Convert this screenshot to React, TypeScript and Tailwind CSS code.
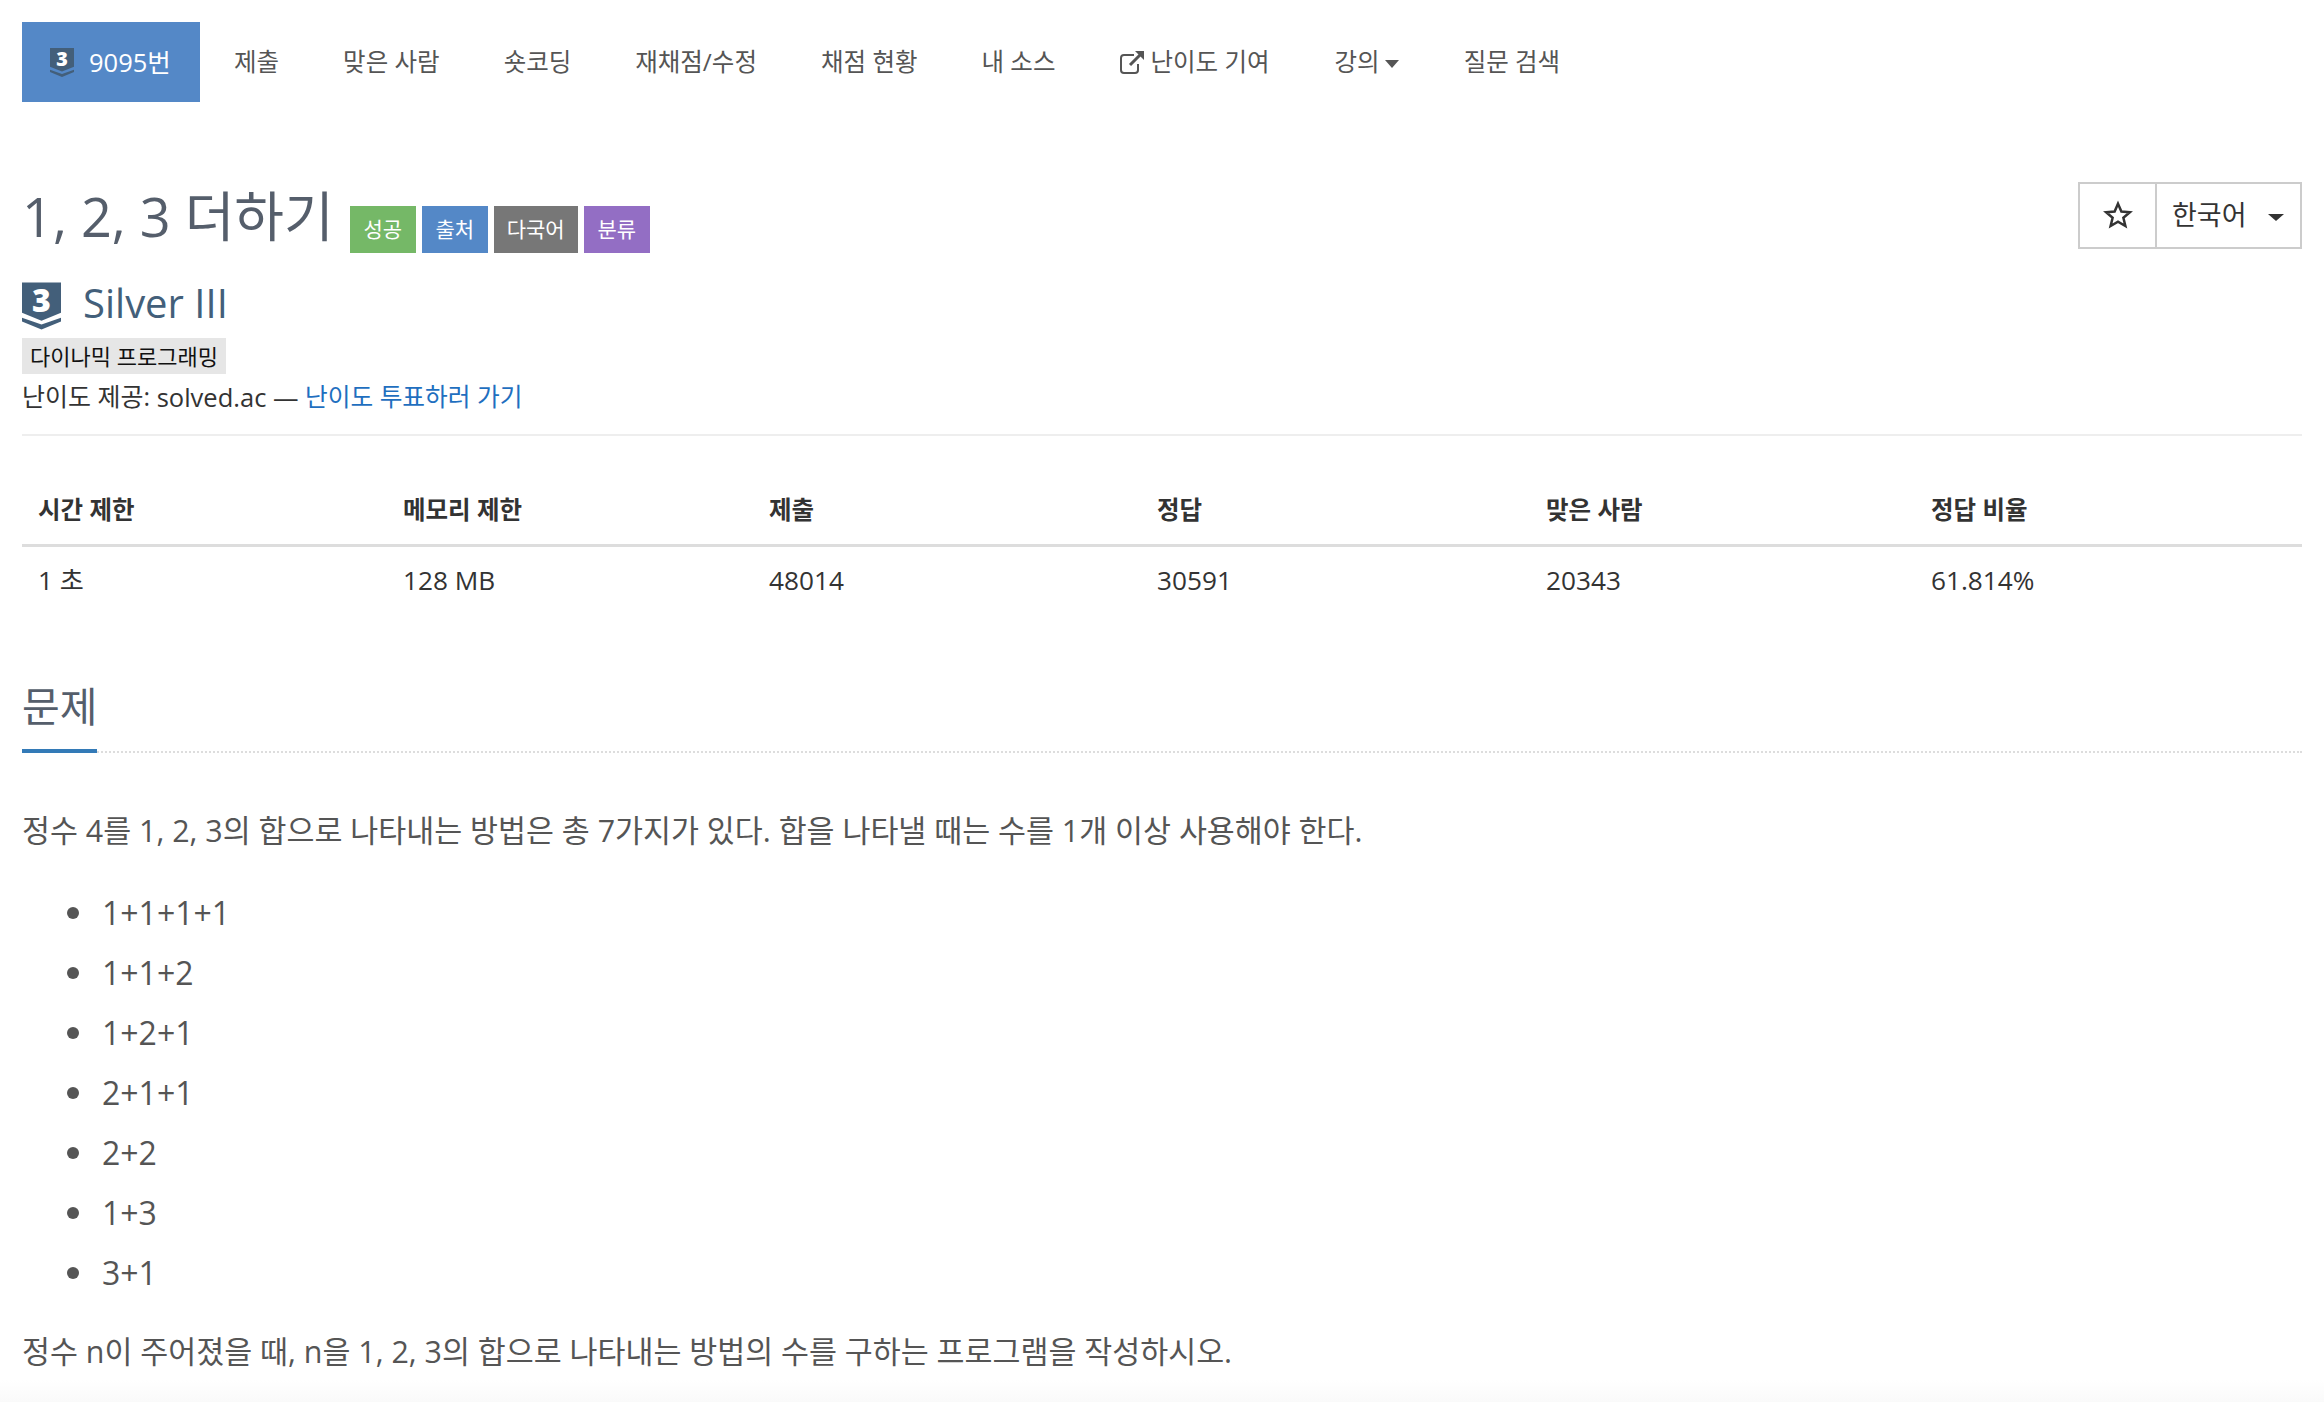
const font = { fontFamily: '"Open Sans","Noto Sans CJK KR",sans-serif' };

function Shield({ className, fill, digit }: { className: string; fill: string; digit: string }) {
  return (
    <svg viewBox="0 0 40 48" className={`${className} overflow-visible`}>
      <path d="M0 0H40V31L20 39L0 31Z" fill={fill} />
      <path d="M0 36L20 43L40 36V40L20 48L0 40Z" fill={fill} />
      <text x="20" y="30" textAnchor="middle" fontSize="33" fontWeight="800" fill="#fff" fontFamily="Open Sans">{digit}</text>
    </svg>
  );
}

function Caret() {
  return <span className="inline-block w-0 h-0 border-x-[7px] border-x-transparent border-t-[8px] border-t-[#555] ml-[5px] mt-[3px]"></span>;
}

function ExternalIcon() {
  return (
    <svg viewBox="0 0 26 24" className="w-[26px] h-[24px] mr-[5px]" fill="none" stroke="#555">
      <path d="M15 5H5a3 3 0 0 0-3 3v12a3 3 0 0 0 3 3h11a3 3 0 0 0 3-3v-6" strokeWidth="2" />
      <path d="M11 15L22 4" strokeWidth="3" />
      <path d="M16 1H25V10Z" fill="#555" stroke="none" />
    </svg>
  );
}

const navItems = ['제출', '맞은 사람', '숏코딩', '재채점/수정', '채점 현황', '내 소스'];
const columns = [
  ['시간 제한', '1 초'],
  ['메모리 제한', '128 MB'],
  ['제출', '48014'],
  ['정답', '30591'],
  ['맞은 사람', '20343'],
  ['정답 비율', '61.814%'],
];
const items = ['1+1+1+1', '1+1+2', '1+2+1', '2+1+1', '2+2', '1+3', '3+1'];

export default function App() {
  return (
    <div style={font} className="w-[2324px] h-[1402px] overflow-hidden bg-white px-[22px] pt-[22px] text-[#333]">
      <nav className="flex h-[80px] text-[24.5px] text-[#555]">
        <a className="flex items-center w-[178px] mr-[2px] pl-[28px] bg-[#5488c7] text-white">
          <Shield className="w-[24px] h-[29px] mr-[15px]" fill="#435f7a" digit="3" />
          <span className="text-[25.5px]">9095번</span>
        </a>
        {navItems.map((t) => (
          <a key={t} className="flex items-center px-[32px]">{t}</a>
        ))}
        <a className="flex items-center px-[32px]"><ExternalIcon />난이도 기여</a>
        <a className="flex items-center pl-[33px] pr-[32px]">강의<Caret /></a>
        <a className="flex items-center pl-[33px] pr-[32px]">질문 검색</a>
      </nav>

      <div className="flex justify-between items-start mt-[80px]">
        <div className="flex items-center h-[67px]">
          <h1 className="text-[54px] text-[#555e6b] leading-none">1, 2, 3 더하기</h1>
          <div className="flex gap-[6px] ml-[16px] mt-[28px] text-[21px] text-white">
            <span className="flex items-center justify-center w-[66px] h-[47px] bg-[#75b867]">성공</span>
            <span className="flex items-center justify-center w-[66px] h-[47px] bg-[#5488c7]">출처</span>
            <span className="flex items-center justify-center w-[84px] h-[47px] bg-[#777]">다국어</span>
            <span className="flex items-center justify-center w-[66px] h-[47px] bg-[#936ec4]">분류</span>
          </div>
        </div>
        <div className="flex h-[67px] border-2 border-[#ccc] text-[27px]">
          <div className="flex items-center justify-center w-[77px] border-r-2 border-[#ccc]">
            <svg viewBox="0 0 24 24" className="w-[30px] h-[30px] -mt-[2px]" fill="none" stroke="#333" strokeWidth="2">
              <path d="M12 3l2.7 6.2 6.8.6-5.2 4.4 1.6 6.6L12 17.3l-5.9 3.5 1.6-6.6L2.5 9.8l6.8-.6z" />
            </svg>
          </div>
          <div className="flex items-center pl-[15px] w-[143px]">
            한국어
            <span className="ml-[21px] mt-[4px] w-0 h-0 border-x-[8px] border-x-transparent border-t-[7px] border-t-[#333]"></span>
          </div>
        </div>
      </div>

      <div className="flex items-center h-[48px] mt-[33px]">
        <Shield className="w-[39px] h-[48px] mr-[22px]" fill="#435f7a" digit="3" />
        <span className="text-[40px] text-[#435f7a] -mt-[6px]">Silver III</span>
      </div>
      <div className="mt-[8px]">
        <span className="inline-flex items-center h-[36px] px-[8px] bg-[#e6e6e6] text-[22px] text-[#111]">다이나믹 프로그래밍</span>
      </div>
      <div className="flex items-center h-[40px] mt-[3px] text-[25px]">
        난이도 제공: <span className="text-[25.5px]">&nbsp;solved.ac —&nbsp;</span><a className="text-[#1f6fbf] text-[24.7px]">난이도 투표하러 가기</a>
      </div>
      <hr className="mt-[17px] border-t-2 border-[#eee]" />

      <div className="grid grid-cols-[365px_366px_388px_389px_385px_1fr] text-[24.5px] mt-[51px]">
        {columns.map(([h]) => (
          <div key={h} className="flex items-center h-[60px] pb-[11px] pl-[16px] font-bold border-b-[3px] border-[#ddd]">{h}</div>
        ))}
        {columns.map(([h, v]) => (
          <div key={h} className="flex items-center h-[68px] pl-[16px] text-[26.2px]">{v}</div>
        ))}
      </div>

      <section className="mt-[59px]">
        <div className="border-b-2 border-dotted border-[#ddd]">
          <h2 className="inline-block h-[79px] text-[41px] leading-[65px] text-[#555e6b] border-b-4 border-[#337ab7] -mb-[2px]">문제</h2>
        </div>
        <div className="text-[30.4px] text-[#555]">
          <p className="mt-[54px] leading-[48px]">정수 4를 1, 2, 3의 합으로 나타내는 방법은 총 7가지가 있다. 합을 나타낼 때는 수를 1개 이상 사용해야 한다.</p>
          <ul className="mt-[33px] pl-[45px] text-[32px]">
            {items.map((t) => (
              <li key={t} className="flex items-center h-[60px] pb-[11px]">
                <span className="w-[12px] h-[12px] rounded-full bg-[#555] mr-[23px]"></span>
                {t}
              </li>
            ))}
          </ul>
          <p className="mt-[20px] leading-[48px]">정수 n이 주어졌을 때, n을 1, 2, 3의 합으로 나타내는 방법의 수를 구하는 프로그램을 작성하시오.</p>
        </div>
      </section>
      <div className="h-[30px] mt-[4px] -mx-[22px] bg-gradient-to-b from-white to-[#f8f8f8]"></div>
    </div>
  );
}
